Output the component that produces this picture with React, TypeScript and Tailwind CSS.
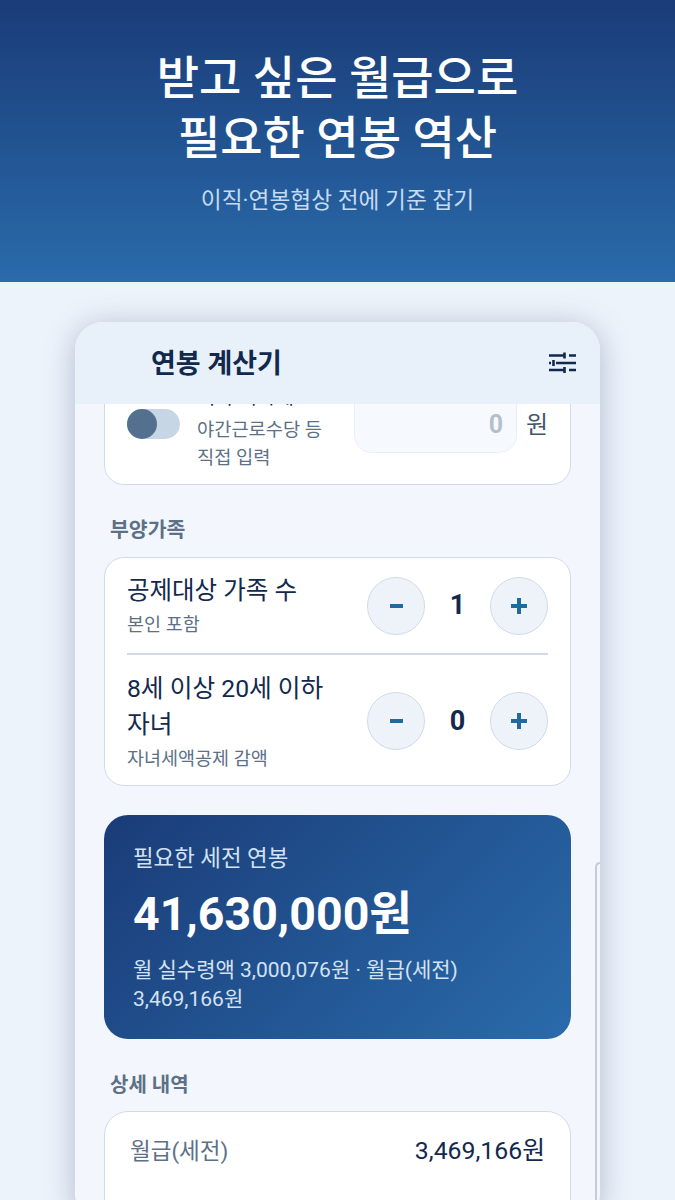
import React from "react";

const font = { fontFamily: 'Roboto, "Noto Sans CJK KR", sans-serif' };

function Stepper({ value }: { value: string }) {
  return (
    <div className="flex items-center shrink-0">
      <button className="w-[58px] h-[58px] rounded-full bg-[#eef3fa] border-[1.5px] border-[#d0dbe9] flex items-center justify-center">
        <span className="w-[13px] h-[4px] bg-[#1f6a9e] block" />
      </button>
      <div className="w-[65px] text-center text-[27px] font-bold text-[#12294d] leading-none">{value}</div>
      <button className="w-[58px] h-[58px] rounded-full bg-[#eef3fa] border-[1.5px] border-[#d0dbe9] flex items-center justify-center">
        <span className="relative w-[16px] h-[16px] block">
          <span className="absolute left-0 top-[6px] w-[16px] h-[4px] bg-[#1f6a9e]" />
          <span className="absolute left-[6px] top-0 w-[4px] h-[16px] bg-[#1f6a9e]" />
        </span>
      </button>
    </div>
  );
}

export default function App() {
  return (
    <div style={font} className="w-[675px] h-[1200px] overflow-hidden bg-[#edf3fb] flex flex-col">
      <header className="h-[282px] shrink-0 bg-gradient-to-b from-[#1a3c78] to-[#2a6bab] flex flex-col items-center pt-[48px]">
        <h1 className="text-[46px] leading-[60px] font-medium text-white text-center">
          받고 싶은 월급으로
          <br />
          필요한 연봉 역산
        </h1>
        <p className="mt-[17px] text-[22.700px] leading-[32px] text-[#c5dbf1]">이직·연봉협상 전에 기준 잡기</p>
      </header>

      <main className="flex-1 pt-10 pl-[75px] pr-[75px] min-h-0">
        <div className="relative w-[525px] h-[900px] rounded-[28px] bg-[#f3f7fd] shadow-[0_4px_30px_rgba(70,90,130,0.36)] overflow-hidden flex flex-col">
          <div className="h-[82px] shrink-0 bg-[#e8f1fa] flex items-center justify-between pl-[76px] pr-[24px]">
            <h2 className="text-[27px] font-bold text-[#12294d] leading-none mt-[2px]">연봉 계산기</h2>
            <svg width="27" height="22" viewBox="0 0 27 22" fill="none" stroke="#12294d" strokeWidth="2.6">
              <path d="M0 3.500h16M15.500 0.500v6M20 3.500h7M0 11h2M4.500 8v6M7 11h20M0 18h16M15.500 15v6M20 18h7" />
            </svg>
          </div>

          <div className="flex-1 overflow-hidden px-[29px]">
            <section className="-mt-[61px] rounded-[20px] border-[1.5px] border-[#d0dbe9] bg-white pl-[22px] pr-[20px] pt-[40px] h-[142px]">
              <div className="flex items-start">
                <div className="relative w-[53px] h-[30px] mt-[25px] rounded-full bg-[#c7d6e5] shrink-0">
                  <span className="absolute left-0 top-0 w-[30px] h-[30px] rounded-full bg-[#54708f]" />
                </div>
                <div className="ml-[17px] w-[150px] shrink-0 -mt-[1px]">
                  <div className="text-[20px] leading-[28px] mb-[5px] text-[#12294d] whitespace-nowrap">기타 비과세</div>
                  <div className="text-[18.700px] leading-[28px] text-[#5c7088]">
                    야간근로수당 등
                    <br />
                    직접 입력
                  </div>
                </div>
                <div className="ml-[7px] -mt-[15px] w-[163px] h-[84px] shrink-0 rounded-[18px] border-[1.5px] border-[#e8eef6] bg-[#f6faff] flex items-center justify-end pr-[13px] pt-[26px]">
                  <span className="text-[25px] font-bold text-[#b4bfcd] leading-none">0</span>
                </div>
                <span className="ml-[9px] mt-[29px] text-[24px] leading-none text-[#42566e]">원</span>
              </div>
            </section>

            <h3 className="mt-[30px] ml-[6px] text-[20.500px] leading-[30px] font-bold text-[#5c7088]">부양가족</h3>
            <section className="mt-[12px] rounded-[20px] border-[1.5px] border-[#d0dbe9] bg-white pl-[22px] pr-[22px]">
              <div className="h-[97px] flex items-center justify-between border-b-2 border-[#d0dbe9]">
                <div>
                  <div className="text-[24.500px] leading-[36px] text-[#12294d]">공제대상 가족 수</div>
                  <div className="mt-[3px] text-[18.500px] leading-[26px] text-[#5c7088]">본인 포함</div>
                </div>
                <Stepper value="1" />
              </div>
              <div className="h-[130px] pt-[2px] flex items-center justify-between">
                <div>
                  <div className="text-[24.700px] leading-[36px] text-[#12294d]">
                    8세 이상 20세 이하
                    <br />
                    자녀
                  </div>
                  <div className="mt-[3px] text-[18.500px] leading-[26px] text-[#5c7088] whitespace-nowrap">자녀세액공제 감액</div>
                </div>
                <Stepper value="0" />
              </div>
            </section>

            <section className="mt-[29px] h-[224px] rounded-[24px] bg-[linear-gradient(135deg,#1a3c78,#2a6bab)] px-[29px] pt-[28px] text-white">
              <div className="text-[22.400px] leading-[30px] text-[#d3e2f2]">필요한 세전 연봉</div>
              <div className="mt-[11px] text-[46.500px] leading-[60px] font-bold">41,630,000원</div>
              <div className="mt-[12px] text-[21px] leading-[29px] text-[#d3e2f2]">
                월 실수령액 3,000,076원 · 월급(세전)
                <br />
                3,469,166원
              </div>
            </section>

            <h3 className="mt-[31px] ml-[6px] text-[20px] leading-[30px] font-bold text-[#5c7088]">상세 내역</h3>
            <section className="mt-[11px] h-[200px] rounded-[24px] border-[1.5px] border-[#d0dbe9] bg-white px-[25px] pt-[22px]">
              <div className="flex items-center justify-between">
                <span className="text-[22.500px] leading-[34px] text-[#5c7088]">월급(세전)</span>
                <span className="text-[24.800px] leading-[34px] text-[#12294d]">3,469,166원</span>
              </div>
            </section>
          </div>

          <div className="absolute right-0 top-[540px] bottom-0 w-[5px] rounded-tl-[5px] border-l-2 border-t-2 border-[#c3ccd8]" />
        </div>
      </main>
    </div>
  );
}
